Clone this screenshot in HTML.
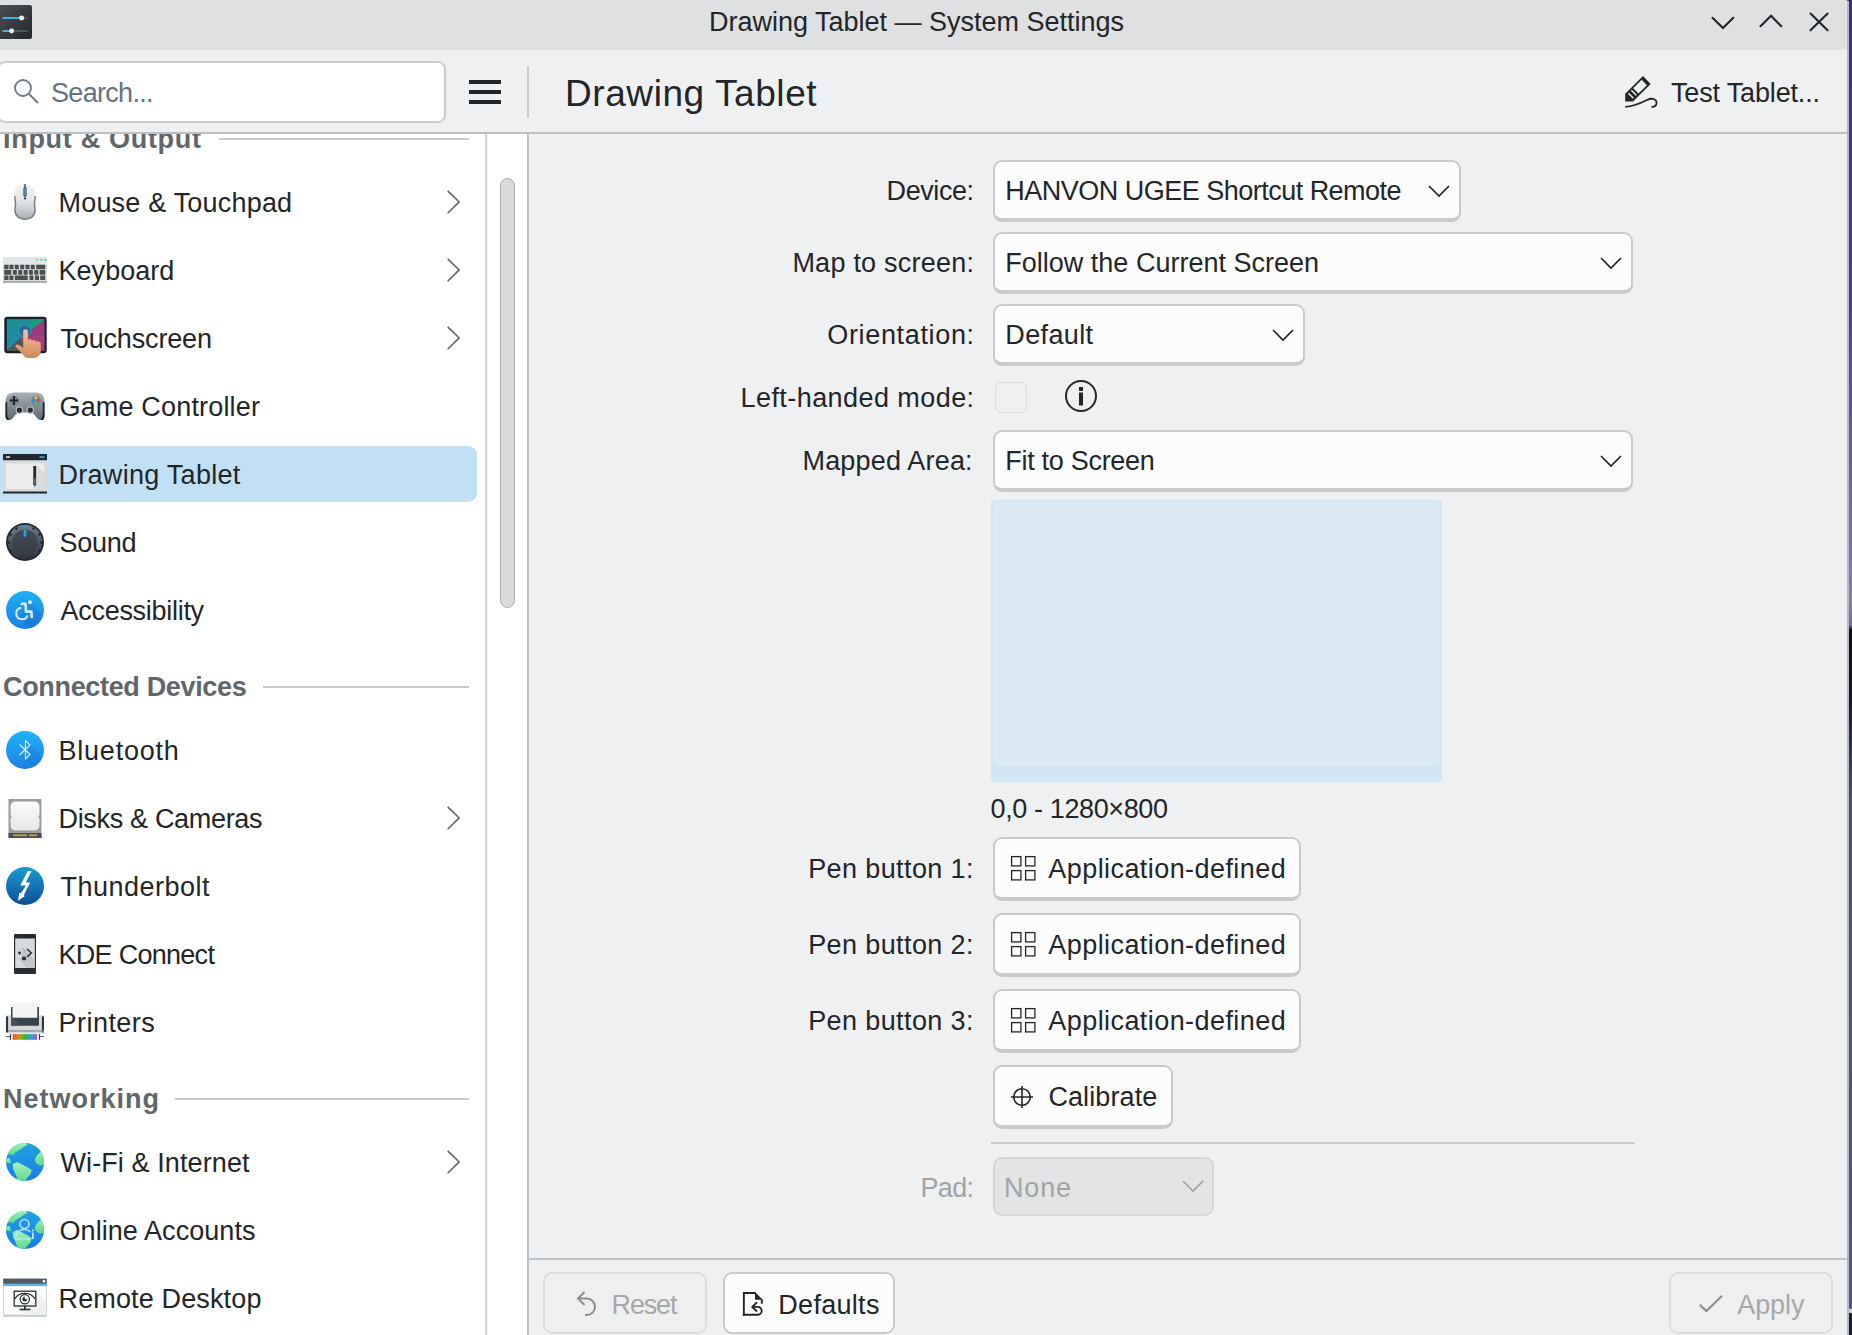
<!DOCTYPE html>
<html><head><meta charset="utf-8"><title>Drawing Tablet — System Settings</title>
<style>
html,body{margin:0;padding:0;}
body{width:1852px;height:1335px;overflow:hidden;position:relative;background:#4a3f94;font-family:"Liberation Sans", sans-serif;}
.t{position:absolute;white-space:nowrap;}
svg{overflow:visible}
</style></head><body>
<div style="position:absolute;left:1848px;top:0px;width:4px;height:1335px;background:linear-gradient(180deg,#3c2c8c 0%,#4a3a9c 22.5%,#6a5ab0 33.7%,#8878c0 44.9%,#7a6ab0 46.8%,#120a1c 47.2%,#1a1430 52.4%,#4a4888 59.9%,#54528f 98%,#d0d0e0 98.05%,#d0d0e0 98.3%,#1a1a40 98.4%)"></div>
<div style="position:absolute;left:0px;top:0px;width:1848px;height:1335px;background:#eff0f1;border-top-right-radius:3px;"></div>
<div style="position:absolute;left:0px;top:0px;width:1848px;height:50px;background:#dee0e2;border-top-right-radius:3px;"></div>
<svg style="position:absolute;left:0px;top:5px" width="32" height="34" viewBox="0 0 32 34">
<defs><linearGradient id="ai" x1="0" y1="0" x2="1" y2="1"><stop offset="0" stop-color="#4d5257"/><stop offset="1" stop-color="#23272b"/></linearGradient></defs>
<rect x="-4" y="0" width="36" height="34" rx="2" fill="url(#ai)"/>
<rect x="2.5" y="12" width="25" height="2" fill="#505558"/>
<rect x="2.5" y="12" width="19" height="2" fill="#3daee9"/>
<circle cx="21.6" cy="13" r="2.4" fill="#fff"/>
<rect x="2.5" y="25" width="25" height="2" fill="#505558"/>
<rect x="2.5" y="25" width="9" height="2" fill="#3daee9"/>
<circle cx="11.6" cy="26" r="2.4" fill="#fff"/>
</svg>
<div class="t" style="left:709.00px;top:8.94px;font-size:27px;line-height:27px;color:#232629;font-weight:400;letter-spacing:-0.005px;">Drawing Tablet — System Settings</div>
<svg style="position:absolute;left:1700px;top:0px" width="148" height="50" viewBox="0 0 148 50">
<g fill="none" stroke="#232629" stroke-width="2.1" stroke-linecap="round" stroke-linejoin="miter">
<path d="M12.5 17.8 L23 28 L33.3 17.8"/>
<path d="M60.5 26.2 L71 15.8 L81.3 26.2"/>
<path d="M110.5 13.6 L127.6 30.3 M127.6 13.6 L110.5 30.3"/>
</g></svg>
<div style="position:absolute;left:0px;top:134px;width:486px;height:1201px;background:#fff"></div>
<div style="position:absolute;left:485.2px;top:134px;width:1.5px;height:1201px;background:#d5d7d8"></div>
<div style="position:absolute;left:487.5px;top:134px;width:40px;height:1201px;background:#fff"></div>
<div style="position:absolute;left:527px;top:134px;width:2px;height:1201px;background:#bec1c4"></div>
<div style="position:absolute;left:499.5px;top:178px;width:15px;height:430px;box-sizing:border-box;background:#d9dbdc;border:1.5px solid #a9abac;border-radius:8px;"></div>
<div style="position:absolute;left:-10px;top:446px;width:487px;height:56px;background:#c2e0f5;border-radius:9px;"></div>
<div class="t" style="left:3.00px;top:125.94px;font-size:27px;line-height:27px;color:#61666a;font-weight:700;letter-spacing:0.697px;">Input &amp; Output</div>
<div style="position:absolute;left:219px;top:138px;width:250px;height:2px;background:#c8cbce"></div>
<div class="t" style="left:3.00px;top:673.94px;font-size:27px;line-height:27px;color:#61666a;font-weight:700;letter-spacing:-0.336px;">Connected Devices</div>
<div style="position:absolute;left:263px;top:686px;width:206px;height:2px;background:#c8cbce"></div>
<div class="t" style="left:3.00px;top:1085.94px;font-size:27px;line-height:27px;color:#61666a;font-weight:700;letter-spacing:0.987px;">Networking</div>
<div style="position:absolute;left:175px;top:1098px;width:294px;height:2px;background:#c8cbce"></div>
<div class="t" style="left:58.50px;top:189.94px;font-size:27px;line-height:27px;color:#232629;font-weight:400;letter-spacing:0.198px;">Mouse &amp; Touchpad</div>
<svg style="position:absolute;left:440px;top:186px" width="30" height="30" viewBox="0 0 30 30"><path d="M7.7 4.8 L19.2 15.9 L7.7 27.2" fill="none" stroke="#63686b" stroke-width="1.6"/></svg>
<div class="t" style="left:58.50px;top:257.94px;font-size:27px;line-height:27px;color:#232629;font-weight:400;letter-spacing:0.034px;">Keyboard</div>
<svg style="position:absolute;left:440px;top:254px" width="30" height="30" viewBox="0 0 30 30"><path d="M7.7 4.8 L19.2 15.9 L7.7 27.2" fill="none" stroke="#63686b" stroke-width="1.6"/></svg>
<div class="t" style="left:60.50px;top:325.94px;font-size:27px;line-height:27px;color:#232629;font-weight:400;letter-spacing:-0.167px;">Touchscreen</div>
<svg style="position:absolute;left:440px;top:322px" width="30" height="30" viewBox="0 0 30 30"><path d="M7.7 4.8 L19.2 15.9 L7.7 27.2" fill="none" stroke="#63686b" stroke-width="1.6"/></svg>
<div class="t" style="left:59.50px;top:393.94px;font-size:27px;line-height:27px;color:#232629;font-weight:400;letter-spacing:0.166px;">Game Controller</div>
<div class="t" style="left:58.50px;top:461.94px;font-size:27px;line-height:27px;color:#232629;font-weight:400;letter-spacing:0.286px;">Drawing Tablet</div>
<div class="t" style="left:59.50px;top:529.94px;font-size:27px;line-height:27px;color:#232629;font-weight:400;letter-spacing:-0.289px;">Sound</div>
<div class="t" style="left:60.50px;top:597.94px;font-size:27px;line-height:27px;color:#232629;font-weight:400;letter-spacing:-0.286px;">Accessibility</div>
<div class="t" style="left:58.50px;top:737.94px;font-size:27px;line-height:27px;color:#232629;font-weight:400;letter-spacing:0.778px;">Bluetooth</div>
<div class="t" style="left:58.50px;top:805.94px;font-size:27px;line-height:27px;color:#232629;font-weight:400;letter-spacing:-0.324px;">Disks &amp; Cameras</div>
<svg style="position:absolute;left:440px;top:802px" width="30" height="30" viewBox="0 0 30 30"><path d="M7.7 4.8 L19.2 15.9 L7.7 27.2" fill="none" stroke="#63686b" stroke-width="1.6"/></svg>
<div class="t" style="left:60.50px;top:873.94px;font-size:27px;line-height:27px;color:#232629;font-weight:400;letter-spacing:0.480px;">Thunderbolt</div>
<div class="t" style="left:58.50px;top:941.94px;font-size:27px;line-height:27px;color:#232629;font-weight:400;letter-spacing:-0.718px;">KDE Connect</div>
<div class="t" style="left:58.50px;top:1009.94px;font-size:27px;line-height:27px;color:#232629;font-weight:400;letter-spacing:0.468px;">Printers</div>
<div class="t" style="left:60.50px;top:1149.94px;font-size:27px;line-height:27px;color:#232629;font-weight:400;letter-spacing:0.098px;">Wi-Fi &amp; Internet</div>
<svg style="position:absolute;left:440px;top:1146px" width="30" height="30" viewBox="0 0 30 30"><path d="M7.7 4.8 L19.2 15.9 L7.7 27.2" fill="none" stroke="#63686b" stroke-width="1.6"/></svg>
<div class="t" style="left:59.50px;top:1217.94px;font-size:27px;line-height:27px;color:#232629;font-weight:400;letter-spacing:0.064px;">Online Accounts</div>
<div class="t" style="left:58.50px;top:1285.94px;font-size:27px;line-height:27px;color:#232629;font-weight:400;letter-spacing:0.141px;">Remote Desktop</div>
<svg style="position:absolute;left:13px;top:183px" width="24" height="38" viewBox="0 0 24 38">
<defs><linearGradient id="mg" x1="0" y1="0" x2="0" y2="1"><stop offset="0" stop-color="#f3f4f5"/><stop offset="0.5" stop-color="#e0e3e5"/><stop offset="1" stop-color="#a9afb5"/></linearGradient></defs>
<path d="M12 1.2 C5.6 1.2 1.4 5.2 1.4 11.5 V26 C1.4 33 5.6 36.8 12 36.8 C18.4 36.8 22.6 33 22.6 26 V11.5 C22.6 5.2 18.4 1.2 12 1.2Z" fill="url(#mg)"/>
<path d="M1.9 13 C1.6 16, 2.6 18, 2.6 20 C2.6 23, 2.0 24, 2.0 27 C2.0 32.5, 5.8 36.2, 12 36.2 C18.2 36.2, 22.0 32.5, 22.0 27 C22.0 24, 21.4 23, 21.4 20 C21.4 18, 22.4 16, 22.1 13" fill="none" stroke="#6c7379" stroke-width="1.4" opacity="0.9"/>
<rect x="11.2" y="1" width="1.6" height="4" fill="#5a6268"/>
<rect x="10.4" y="4.2" width="3.2" height="9.6" rx="1.2" fill="#3e4d58"/>
<rect x="10.9" y="5" width="2.2" height="7.5" rx="0.8" fill="#4f86a8"/>
<circle cx="12" cy="15.4" r="1.1" fill="#30363a"/>
</svg>
<svg style="position:absolute;left:3px;top:257px" width="44" height="26" viewBox="0 0 44 26">
<rect x="0" y="0" width="44" height="26" fill="#d8dcde"/>
<rect x="0" y="0" width="44" height="7" fill="#e3e6e8"/>
<rect x="0" y="24" width="44" height="2" fill="#a9b0b3"/>
<rect x="1.2" y="7.700000000000001" width="4.3" height="4.6" rx="0.6" fill="#48524f"/><rect x="6.4" y="7.700000000000001" width="4" height="4.6" rx="0.6" fill="#48524f"/><rect x="11.799999999999999" y="7.700000000000001" width="4" height="4.6" rx="0.6" fill="#48524f"/><rect x="17.2" y="7.700000000000001" width="4" height="4.6" rx="0.6" fill="#48524f"/><rect x="22.5" y="7.700000000000001" width="4" height="4.6" rx="0.6" fill="#48524f"/><rect x="27.8" y="7.700000000000001" width="4" height="4.6" rx="0.6" fill="#48524f"/><rect x="33.2" y="7.700000000000001" width="9" height="4.6" rx="0.6" fill="#48524f"/><rect x="1.2" y="13.1" width="7" height="4.6" rx="0.6" fill="#48524f"/><rect x="9.899999999999999" y="13.1" width="4" height="4.6" rx="0.6" fill="#48524f"/><rect x="15.2" y="13.1" width="4" height="4.6" rx="0.6" fill="#48524f"/><rect x="20.599999999999998" y="13.1" width="4" height="4.6" rx="0.6" fill="#48524f"/><rect x="25.9" y="13.1" width="4" height="4.6" rx="0.6" fill="#48524f"/><rect x="31.2" y="13.1" width="4" height="4.6" rx="0.6" fill="#48524f"/><rect x="36.6" y="13.1" width="5.6" height="4.6" rx="0.6" fill="#48524f"/><rect x="1.2" y="18.4" width="4.3" height="4.6" rx="0.6" fill="#48524f"/><rect x="6.4" y="18.4" width="4" height="4.6" rx="0.6" fill="#48524f"/><rect x="11.799999999999999" y="18.4" width="13" height="4.6" rx="0.6" fill="#48524f"/><rect x="26.5" y="18.4" width="4" height="4.6" rx="0.6" fill="#48524f"/><rect x="32.0" y="18.4" width="4" height="4.6" rx="0.6" fill="#48524f"/><rect x="37.2" y="18.4" width="5" height="4.6" rx="0.6" fill="#48524f"/>
<rect x="33.5" y="2" width="1.6" height="1.6" fill="#2ecc71"/>
<rect x="37.5" y="2" width="1.6" height="1.6" fill="#2ecc71"/>
<rect x="41.5" y="2" width="1.6" height="1.6" fill="#2ecc71"/>
</svg>
<svg style="position:absolute;left:4px;top:316px" width="43" height="44" viewBox="0 0 43 44">
<defs><linearGradient id="hnd" x1="0" y1="0" x2="0" y2="1"><stop offset="0" stop-color="#f6c6a6"/><stop offset="0.5" stop-color="#e3a47c"/><stop offset="1" stop-color="#cf8659"/></linearGradient>
<linearGradient id="tsl" x1="0" y1="0" x2="1" y2="1"><stop offset="0" stop-color="#1d8c94"/><stop offset="1" stop-color="#2288c0"/></linearGradient></defs>
<rect x="0.3" y="0.8" width="42.4" height="36.4" rx="3" fill="#1b2227"/>
<clipPath id="tsc"><rect x="2.6" y="3.3" width="37.8" height="31.4"/></clipPath>
<g clip-path="url(#tsc)">
<rect x="2.6" y="3.3" width="37.8" height="31.4" fill="url(#tsl)"/>
<path d="M16.5 22 L2 3 L41 3 Z" fill="#1d8f90"/>
<path d="M16.5 22 L28 3 L41 3 Z" fill="#14a07c"/>
<path d="M16.5 22 L41 3 L41 35 L26 35 Z" fill="#9c3a7e"/>
<path d="M16.5 22 L41 19 L41 35 L30 35 Z" fill="#a8407a" opacity="0.7"/>
<path d="M2 35 L16.5 22 L24 35 Z" fill="#4e5658"/>
<path d="M16.5 22 L24 35 L27 35 L22 22Z" fill="#c03a55"/>
</g>
<circle cx="20.7" cy="14.7" r="6.2" fill="#27699a" stroke="#2b9fd6" stroke-width="0.9"/>
<path d="M19.2 15.5 C19.2 12.5, 23.9 12.5, 23.9 15.5 L23.9 24.5 C24.5 22.8, 27.5 22.8, 28 24.8 C28.8 23.5, 31.5 23.8, 32 25.8 C33 24.8, 36.5 25.2, 36.8 27.5 L36.8 34 C36.8 39.5, 33.5 42, 29 42 L25 42 C21.5 42, 19.5 40, 17.5 37 L11.8 31 C11 30, 11.5 28.3, 13.5 28.5 C15.5 28.7, 17.5 30.5, 19.2 32 Z" fill="url(#hnd)"/>
</svg>
<svg style="position:absolute;left:5px;top:391px" width="40" height="30" viewBox="0 0 40 30">
<defs><linearGradient id="gcg" x1="0" y1="0" x2="0" y2="1"><stop offset="0" stop-color="#a9b0b6"/><stop offset="1" stop-color="#5f676e"/></linearGradient></defs>
<path d="M9 1.5 L31 1.5 C36.5 1.5, 39.5 5, 39.5 11 L39.5 25 C39.5 29, 35.5 30.5, 32.5 27.5 C30 25, 29 22, 26 21.6 L14 21.6 C11 22, 10 25, 7.5 27.5 C4.5 30.5, 0.5 29, 0.5 25 L0.5 11 C0.5 5, 3.5 1.5, 9 1.5Z" fill="url(#gcg)"/>
<path d="M0.5 11.5 L0.5 25 C0.5 28.5, 2.5 29.5, 4.5 29 C2.8 27, 2.2 25, 2.2 22 L2.2 11Z M39.5 11.5 L39.5 25 C39.5 28.5, 37.5 29.5, 35.5 29 C37.2 27, 37.8 25, 37.8 22 L37.8 11Z" fill="#1e2226"/>
<circle cx="9" cy="9.5" r="4.8" fill="#7d858c"/>
<path d="M8 5 H10 V8.5 H13.2 V10.5 H10 V14 H8 V10.5 H4.8 V8.5 H8Z" fill="#23272b"/>
<circle cx="30.9" cy="9.5" r="4.8" fill="#7d858c"/>
<circle cx="30.9" cy="6.7" r="1.45" fill="#fdbc3b"/><circle cx="28.1" cy="9.5" r="1.45" fill="#2196f3"/><circle cx="33.7" cy="9.5" r="1.45" fill="#e9444f"/><circle cx="30.9" cy="12.3" r="1.45" fill="#2ecc71"/>
<circle cx="14.4" cy="19.1" r="3.8" fill="#b5bcc2"/>
<circle cx="25.3" cy="19.1" r="3.8" fill="#b5bcc2"/>
<circle cx="14.4" cy="19.1" r="2.6" fill="#262a2e"/>
<circle cx="25.3" cy="19.1" r="2.6" fill="#262a2e"/>
</svg>
<svg style="position:absolute;left:3px;top:454px" width="44" height="40" viewBox="0 0 44 40">
<rect x="0" y="0" width="44" height="6.5" fill="#23272b"/>
<rect x="3" y="2.3" width="4" height="1.6" fill="#e8e8e8"/>
<rect x="36.5" y="2.3" width="5" height="1.6" fill="#3daee9"/>
<rect x="0" y="6.5" width="44" height="31.5" fill="#d9dadb"/>
<rect x="3" y="9.5" width="38" height="25.5" fill="#ededed"/>
<path d="M32 9.5 L41 18.5 L41 35 L32 35Z" fill="#dcdcdc"/>
<rect x="30.3" y="12" width="2.8" height="19" fill="#23272b"/>
<rect x="30.3" y="24" width="2.8" height="6" fill="#59636b"/>
<path d="M30.3 31 L33.1 31 L31.7 34Z" fill="#3daee9"/>
<rect x="0" y="37.5" width="44" height="2" fill="#23272b"/>
</svg>
<svg style="position:absolute;left:6px;top:523px" width="38" height="38" viewBox="0 0 38 38">
<defs><linearGradient id="sg1" x1="0" y1="0" x2="0" y2="1"><stop offset="0" stop-color="#707c8a"/><stop offset="1" stop-color="#2c3238"/></linearGradient>
<linearGradient id="sg2" x1="0" y1="0" x2="0" y2="1"><stop offset="0" stop-color="#444a55"/><stop offset="1" stop-color="#363c44"/></linearGradient></defs>
<circle cx="19" cy="19" r="19" fill="#222830"/>
<circle cx="19" cy="19" r="17.3" fill="url(#sg1)"/>
<circle cx="19" cy="19.5" r="12.8" fill="url(#sg2)"/>
<g fill="#1f252b"><circle cx="10.5" cy="5.5" r="1.2"/><circle cx="27.5" cy="5.5" r="1.2"/><circle cx="4.5" cy="11.5" r="1.2"/><circle cx="33.5" cy="11.5" r="1.2"/><circle cx="2.6" cy="19.5" r="1.2"/><circle cx="35.4" cy="19.5" r="1.2"/><circle cx="4.5" cy="28" r="1.2"/><circle cx="33.5" cy="28" r="1.2"/></g>
<circle cx="19" cy="3.4" r="1.4" fill="#1d99f3"/>
<rect x="17.6" y="7" width="2.8" height="6.8" rx="1.4" fill="#1aa3f5"/>
</svg>
<svg style="position:absolute;left:6px;top:591px" width="38" height="38" viewBox="0 0 38 38">
<defs><linearGradient id="acg" x1="0" y1="0" x2="0" y2="1"><stop offset="0" stop-color="#1fb0f5"/><stop offset="1" stop-color="#1a7fe0"/></linearGradient></defs>
<circle cx="19" cy="19" r="19" fill="url(#acg)"/>
<path d="M22 9 L37 24 A19 19 0 0 1 24 37.5 L14 27Z" fill="#1565b8" opacity="0.25"/>
<circle cx="24" cy="11.2" r="2" fill="#e3f1fb"/>
<path d="M15.1 16.7 A5.8 5.8 0 1 0 21.55 24.4" fill="none" stroke="#d6ebfa" stroke-width="2"/>
<path d="M15.2 14 C16.5 11.8 19.6 12 19.8 14.8 L19.9 20.6 L25.4 20.6 L25.8 27" fill="none" stroke="#d6ebfa" stroke-width="2.6" stroke-linejoin="round"/>
</svg>
<svg style="position:absolute;left:6px;top:731px" width="38" height="38" viewBox="0 0 38 38">
<defs><linearGradient id="btg" x1="0" y1="0" x2="0" y2="1"><stop offset="0" stop-color="#1eb4f8"/><stop offset="1" stop-color="#1d7fe3"/></linearGradient></defs>
<circle cx="19" cy="19" r="19" fill="url(#btg)"/>
<path d="M20 10 L37 27 A19 19 0 0 1 27 36.5 L18 27Z" fill="#1565b8" opacity="0.2"/>
<path d="M13.5 13.5 L24 23.5 L19.5 28 L19.5 9.5 L24 14 L13.5 24" fill="none" stroke="#cfe9fb" stroke-width="1.3" stroke-linejoin="round"/>
</svg>
<svg style="position:absolute;left:8px;top:799px" width="34" height="39" viewBox="0 0 34 39">
<rect x="0.5" y="0" width="33" height="39" fill="#9a9ea1"/>
<rect x="0.5" y="34" width="33" height="5" fill="#4a5054"/>
<rect x="5" y="35.5" width="14" height="1.6" fill="#e0a030"/>
<rect x="21" y="35.5" width="8" height="1.6" fill="#e0a030"/>
<defs><linearGradient id="dkg" x1="0" y1="0" x2="0" y2="1"><stop offset="0" stop-color="#fafbfb"/><stop offset="1" stop-color="#e5e7e9"/></linearGradient></defs>
<path d="M8 2.5 H26 C29.5 2.5, 31.5 4.5, 31.5 8 V16 C30 17, 30 18.5, 31.5 19.5 V26 C31.5 29.5, 29.5 31.5, 26 31.5 H8 C4.5 31.5, 2.5 29.5, 2.5 26 V19.5 C4 18.5, 4 17, 2.5 16 V8 C2.5 4.5, 4.5 2.5, 8 2.5Z" fill="url(#dkg)"/>
</svg>
<svg style="position:absolute;left:6px;top:867px" width="38" height="38" viewBox="0 0 38 38">
<defs><linearGradient id="tbg" x1="0" y1="0" x2="0" y2="1"><stop offset="0" stop-color="#1a9ad0"/><stop offset="1" stop-color="#0d4f96"/></linearGradient></defs>
<circle cx="19" cy="19" r="19" fill="url(#tbg)"/>
<path d="M21.7 4 L25.5 4 L19.8 15.5 L24.1 15.5 L17.8 28.3 L18.9 29.1 L12 33.8 L13.3 25.6 L14.9 26.6 L19.8 18.5 L14.2 18.5 Z" fill="#ffffff"/>
</svg>
<svg style="position:absolute;left:14px;top:934px" width="22" height="40" viewBox="0 0 22 40">
<rect x="0" y="0" width="22" height="40" rx="1" fill="#2a2e32"/>
<rect x="1.2" y="4.5" width="19.6" height="29.5" fill="#d7dadc"/>
<path d="M9 14 L20.8 25.8 L20.8 34 L13 34 L6 26Z" fill="#c3c7ca"/>
<rect x="7" y="1.3" width="8" height="1.4" fill="#1c1f22"/>
<circle cx="5.6" cy="19" r="1.4" fill="#2a2e32"/>
<circle cx="10" cy="24.5" r="2.1" fill="#2a2e32"/>
<path d="M13 15 L17.3 19 L13 23" fill="none" stroke="#2a2e32" stroke-width="1.6"/>
<path d="M8.5 14.5 L11.5 17.5" stroke="#2a2e32" stroke-width="0.7" stroke-dasharray="1 1"/>
</svg>
<svg style="position:absolute;left:5px;top:1002px" width="40" height="39" viewBox="0 0 40 39">
<defs><linearGradient id="rb" x1="0" y1="0" x2="1" y2="0"><stop offset="0" stop-color="#e8442e"/><stop offset="0.25" stop-color="#e0901e"/><stop offset="0.5" stop-color="#1ec61e"/><stop offset="0.75" stop-color="#3a9ee0"/><stop offset="1" stop-color="#9a5ad8"/></linearGradient></defs>
<rect x="0.8" y="13.4" width="38.2" height="18.2" fill="#d5d9dc"/>
<rect x="7.4" y="1" width="24.7" height="15" fill="#f3f4f5"/>
<path d="M6 5 H7.5 V15.8 H32.3 V5 H34 V22.7 C34 23.3, 33.6 23.7, 33 23.7 H7 C6.4 23.7, 6 23.3, 6 22.7Z" fill="#3a424c"/>
<path d="M7.5 15.8 L15 23.7 H7 C6.4 23.7 6 23.3 6 22.7 V15.8Z" fill="#4a535d"/>
<rect x="0.8" y="28" width="38.2" height="2" fill="#a3a9ae"/>
<rect x="1" y="14.3" width="2.1" height="16.2" rx="0.8" fill="#2f353b"/>
<rect x="36.9" y="14.3" width="2.1" height="16.2" rx="0.8" fill="#2f353b"/>
<rect x="37.5" y="27.8" width="1.5" height="2.1" fill="#27c93f"/>
<rect x="1" y="34" width="4" height="0.9" fill="#4a535d"/>
<rect x="35" y="34" width="4" height="0.9" fill="#4a535d"/>
<rect x="4.9" y="32.1" width="1.2" height="5.7" fill="#2f353b"/>
<rect x="33.9" y="32.1" width="1.2" height="5.7" fill="#2f353b"/>
<rect x="7.7" y="32.1" width="24.4" height="5.7" fill="url(#rb)"/>
</svg>
<svg style="position:absolute;left:6px;top:1143px" width="38" height="38" viewBox="0 0 38 38">
<defs><linearGradient id="glg1" x1="0" y1="0" x2="0" y2="1"><stop offset="0" stop-color="#1fa3dd"/><stop offset="1" stop-color="#1a7de8"/></linearGradient>
<linearGradient id="lnd1" x1="0" y1="0" x2="0" y2="1"><stop offset="0" stop-color="#a2f3bd"/><stop offset="1" stop-color="#5cd684"/></linearGradient></defs>
<circle cx="19" cy="19" r="19" fill="url(#glg1)"/>
<clipPath id="gcl1"><circle cx="19" cy="19" r="19"/></clipPath>
<g clip-path="url(#gcl1)" fill="url(#lnd1)">
<path d="M1.1 11.6 L6.4 11.4 L7.5 12.7 L9 9.7 L15 6 L18 3.4 L21.3 2.2 L20.2 -1 L-2 -1 L-2 11.6 Z"/>
<path d="M-1 16.2 L3.4 15 L5.2 19.8 L3 20.3 L-1 18.5Z"/>
<path d="M6.7 21 L11.2 19.1 L16.5 21.7 L21 24 L25.8 27 L24.7 31.1 L20.2 36 L19.8 40 L11 40 L11.2 35.6 L9.7 31.5 L7.1 26.2 Z"/>
<path d="M28.8 17.2 C29.5 14, 31 12, 35.2 8.6 L40 7 L40 22 L37.4 22.1 C35 22.8, 33 23, 30 20.2 Z"/>
</g>
</svg>
<svg style="position:absolute;left:6px;top:1211px" width="38" height="38" viewBox="0 0 38 38">
<defs><linearGradient id="glg2" x1="0" y1="0" x2="0" y2="1"><stop offset="0" stop-color="#1fa3dd"/><stop offset="1" stop-color="#1a7de8"/></linearGradient>
<linearGradient id="lnd2" x1="0" y1="0" x2="0" y2="1"><stop offset="0" stop-color="#a2f3bd"/><stop offset="1" stop-color="#5cd684"/></linearGradient></defs>
<circle cx="19" cy="19" r="19" fill="url(#glg2)"/>
<clipPath id="gcl2"><circle cx="19" cy="19" r="19"/></clipPath>
<g clip-path="url(#gcl2)" fill="url(#lnd2)">
<path d="M1.1 11.6 L6.4 11.4 L7.5 12.7 L9 9.7 L15 6 L18 3.4 L21.3 2.2 L20.2 -1 L-2 -1 L-2 11.6 Z"/>
<path d="M-1 16.2 L3.4 15 L5.2 19.8 L3 20.3 L-1 18.5Z"/>
<path d="M6.7 21 L11.2 19.1 L16.5 21.7 L21 24 L25.8 27 L24.7 31.1 L20.2 36 L19.8 40 L11 40 L11.2 35.6 L9.7 31.5 L7.1 26.2 Z"/>
<path d="M28.8 17.2 C29.5 14, 31 12, 35.2 8.6 L40 7 L40 22 L37.4 22.1 C35 22.8, 33 23, 30 20.2 Z"/>
</g>

<g fill="none" stroke="#bfe3fa" stroke-width="1.6" opacity="0.95">
<circle cx="18.5" cy="13" r="4.5"/>
<path d="M9.5 28 C10 21, 14 18.5, 18.5 18.5 C21 18.5, 23 19.5, 24.5 21"/>
<path d="M9.5 28 H24"/>
</g>
<rect x="26" y="21.5" width="1.8" height="6.5" fill="#bfe3fa"/>
<rect x="26" y="18.5" width="1.8" height="1.8" fill="#bfe3fa"/>
</svg>
<svg style="position:absolute;left:3px;top:1278px" width="44" height="40" viewBox="0 0 44 40">
<rect x="0.2" y="0.6" width="43.6" height="38.2" fill="#c6cbce"/>
<rect x="1" y="0.6" width="42" height="36" fill="#fdfdfd"/>
<path d="M12 28 L32.8 13.2 L43 23 L43 36.6 L21 36.6 Z" fill="#eceeef" opacity="0.9"/>
<rect x="0.2" y="0.6" width="43.6" height="5.3" fill="#535c66"/>
<rect x="0.2" y="5.9" width="43.6" height="2.2" fill="#5ab8e8"/>
<circle cx="41" cy="3.3" r="1.3" fill="#fff"/>
<rect x="11.2" y="13.2" width="21.6" height="14.8" fill="#fff" stroke="#2a2e32" stroke-width="1.3"/>
<path d="M11.8 21 C14 17, 18 15.4, 21.8 15.4 C25.6 15.4, 29.6 17, 32.2 21" fill="none" stroke="#2a2e32" stroke-width="1.2"/>
<circle cx="21.8" cy="21.2" r="4.6" fill="#fff" stroke="#2a2e32" stroke-width="1.2"/>
<circle cx="21.8" cy="21.2" r="2.4" fill="#2a2e32"/>
<path d="M21.8 21.2 L21.8 18.6 A2.6 2.6 0 0 1 24.4 21.2Z" fill="#fff"/>
<rect x="21" y="28" width="1.7" height="3.5" fill="#2a2e32"/>
<rect x="16.5" y="30.8" width="11" height="1.4" rx="0.7" fill="#2a2e32"/>
</svg>
<div style="position:absolute;left:0px;top:50px;width:1848px;height:82px;background:#eff0f1"></div>
<div style="position:absolute;left:0px;top:132px;width:1848px;height:2px;background:#bec1c4"></div>
<div style="position:absolute;left:-3px;top:61px;width:449px;height:62px;box-sizing:border-box;background:#fff;border:2px solid #cbcdce;border-radius:8px;"></div>
<svg style="position:absolute;left:14px;top:79px" width="26" height="26" viewBox="0 0 26 26"><g fill="none" stroke="#6e7d89" stroke-width="1.9"><circle cx="9" cy="9" r="8"/><path d="M15 15 L24 24"/></g></svg>
<div class="t" style="left:51.00px;top:79.94px;font-size:27px;line-height:27px;color:#637384;font-weight:400;letter-spacing:-0.694px;">Search...</div>
<div style="position:absolute;left:469px;top:80px;width:32px;height:4px;background:#232629"></div>
<div style="position:absolute;left:469px;top:90px;width:32px;height:4px;background:#232629"></div>
<div style="position:absolute;left:469px;top:100px;width:32px;height:4px;background:#232629"></div>
<div style="position:absolute;left:527px;top:66px;width:2px;height:52px;background:#c9cccf"></div>
<div class="t" style="left:565.00px;top:75.08px;font-size:37px;line-height:37px;color:#232629;font-weight:400;letter-spacing:0.581px;">Drawing Tablet</div>
<svg style="position:absolute;left:1620px;top:70px" width="45" height="42" viewBox="0 0 45 42">
<path d="M5.2 23.8 L23 6.1 L30.7 14 L13 31.6 L5.2 31.6 Z" fill="#232629"/>
<path d="M21.7 9.75 L26.9 15.2 L18.4 23.4 L13.2 18.3 Z" fill="#eff0f1"/>
<path d="M11.3 20.3 L16.3 25.3 M8.4 23.3 L13.4 28.3" stroke="#eff0f1" stroke-width="1.5"/>
<path d="M5.2 36.8 C 14 36.5, 21 33, 27 30 C 33 27, 37 30, 36.5 33.5 C 36 36, 33.5 37, 31.5 36.8" fill="none" stroke="#232629" stroke-width="1.8"/>
</svg>
<div class="t" style="left:1671.00px;top:79.94px;font-size:27px;line-height:27px;color:#232629;font-weight:400;letter-spacing:-0.159px;">Test Tablet...</div>
<div class="t" style="left:886.60px;top:177.94px;font-size:27px;line-height:27px;color:#232629;font-weight:400;letter-spacing:-0.422px;">Device:</div>
<div style="position:absolute;left:993px;top:160px;width:468px;height:62px;box-sizing:border-box;background:#fcfcfc;border:2px solid #c9cacb;border-bottom-width:4px;border-radius:9px;"></div>
<div class="t" style="left:1005.30px;top:177.94px;font-size:27px;line-height:27px;color:#232629;font-weight:400;letter-spacing:-0.512px;">HANVON UGEE Shortcut Remote</div>
<svg style="position:absolute;left:1428px;top:180px" width="22" height="22" viewBox="0 0 22 22"><path d="M1 6 L11 16 L21 6" fill="none" stroke="#232629" stroke-width="1.7"/></svg>
<div class="t" style="left:792.40px;top:249.94px;font-size:27px;line-height:27px;color:#232629;font-weight:400;letter-spacing:0.240px;">Map to screen:</div>
<div style="position:absolute;left:993px;top:232px;width:640px;height:62px;box-sizing:border-box;background:#fcfcfc;border:2px solid #c9cacb;border-bottom-width:4px;border-radius:9px;"></div>
<div class="t" style="left:1005.30px;top:249.94px;font-size:27px;line-height:27px;color:#232629;font-weight:400;letter-spacing:0.003px;">Follow the Current Screen</div>
<svg style="position:absolute;left:1600px;top:252px" width="22" height="22" viewBox="0 0 22 22"><path d="M1 6 L11 16 L21 6" fill="none" stroke="#232629" stroke-width="1.7"/></svg>
<div class="t" style="left:827.30px;top:321.94px;font-size:27px;line-height:27px;color:#232629;font-weight:400;letter-spacing:0.657px;">Orientation:</div>
<div style="position:absolute;left:993px;top:304px;width:312px;height:62px;box-sizing:border-box;background:#fcfcfc;border:2px solid #c9cacb;border-bottom-width:4px;border-radius:9px;"></div>
<div class="t" style="left:1005.30px;top:321.94px;font-size:27px;line-height:27px;color:#232629;font-weight:400;letter-spacing:0.359px;">Default</div>
<svg style="position:absolute;left:1272px;top:324px" width="22" height="22" viewBox="0 0 22 22"><path d="M1 6 L11 16 L21 6" fill="none" stroke="#232629" stroke-width="1.7"/></svg>
<div class="t" style="left:740.50px;top:384.94px;font-size:27px;line-height:27px;color:#232629;font-weight:400;letter-spacing:0.433px;">Left-handed mode:</div>
<div style="position:absolute;left:995px;top:382px;width:32px;height:31px;box-sizing:border-box;background:#efefef;border:1.5px solid #dcdcdc;border-radius:6px;"></div>
<svg style="position:absolute;left:1064px;top:379px" width="34" height="34" viewBox="0 0 34 34"><circle cx="17" cy="17" r="15" fill="none" stroke="#232629" stroke-width="2"/><rect x="15" y="13.5" width="4" height="13" fill="#232629"/><rect x="15" y="8" width="4" height="4" fill="#232629"/></svg>
<div class="t" style="left:802.50px;top:447.94px;font-size:27px;line-height:27px;color:#232629;font-weight:400;letter-spacing:0.181px;">Mapped Area:</div>
<div style="position:absolute;left:993px;top:430px;width:640px;height:62px;box-sizing:border-box;background:#fcfcfc;border:2px solid #c9cacb;border-bottom-width:4px;border-radius:9px;"></div>
<div class="t" style="left:1005.30px;top:447.94px;font-size:27px;line-height:27px;color:#232629;font-weight:400;letter-spacing:-0.295px;">Fit to Screen</div>
<svg style="position:absolute;left:1600px;top:450px" width="22" height="22" viewBox="0 0 22 22"><path d="M1 6 L11 16 L21 6" fill="none" stroke="#232629" stroke-width="1.7"/></svg>
<div style="position:absolute;left:991px;top:500px;width:451px;height:282px;background:#d1e7f5;border-radius:3px;"></div>
<div style="position:absolute;left:993px;top:502px;width:447px;height:264px;background:#dbeaf4;border-radius:6px;"></div>
<div class="t" style="left:990.60px;top:795.94px;font-size:27px;line-height:27px;color:#232629;font-weight:400;letter-spacing:-0.384px;">0,0 - 1280×800</div>
<div class="t" style="left:808.20px;top:855.94px;font-size:27px;line-height:27px;color:#232629;font-weight:400;letter-spacing:0.389px;">Pen button 1:</div>
<div style="position:absolute;left:993px;top:837px;width:308px;height:64px;box-sizing:border-box;background:#fcfcfc;border:2px solid #c9cacb;border-bottom-width:4px;border-radius:9px;"></div>
<svg style="position:absolute;left:1010px;top:855px" width="26" height="26" viewBox="0 0 26 26"><g fill="none" stroke="#232629" stroke-width="1.3"><rect x="1.6" y="1.6" width="9.3" height="9.3"/><rect x="15.6" y="1.6" width="9.3" height="9.3"/><rect x="1.6" y="15.6" width="9.3" height="9.3"/><rect x="15.6" y="15.6" width="9.3" height="9.3"/></g></svg>
<div class="t" style="left:1048.30px;top:855.94px;font-size:27px;line-height:27px;color:#232629;font-weight:400;letter-spacing:0.431px;">Application-defined</div>
<div class="t" style="left:808.20px;top:931.94px;font-size:27px;line-height:27px;color:#232629;font-weight:400;letter-spacing:0.389px;">Pen button 2:</div>
<div style="position:absolute;left:993px;top:913px;width:308px;height:64px;box-sizing:border-box;background:#fcfcfc;border:2px solid #c9cacb;border-bottom-width:4px;border-radius:9px;"></div>
<svg style="position:absolute;left:1010px;top:931px" width="26" height="26" viewBox="0 0 26 26"><g fill="none" stroke="#232629" stroke-width="1.3"><rect x="1.6" y="1.6" width="9.3" height="9.3"/><rect x="15.6" y="1.6" width="9.3" height="9.3"/><rect x="1.6" y="15.6" width="9.3" height="9.3"/><rect x="15.6" y="15.6" width="9.3" height="9.3"/></g></svg>
<div class="t" style="left:1048.30px;top:931.94px;font-size:27px;line-height:27px;color:#232629;font-weight:400;letter-spacing:0.431px;">Application-defined</div>
<div class="t" style="left:808.20px;top:1007.94px;font-size:27px;line-height:27px;color:#232629;font-weight:400;letter-spacing:0.389px;">Pen button 3:</div>
<div style="position:absolute;left:993px;top:989px;width:308px;height:64px;box-sizing:border-box;background:#fcfcfc;border:2px solid #c9cacb;border-bottom-width:4px;border-radius:9px;"></div>
<svg style="position:absolute;left:1010px;top:1007px" width="26" height="26" viewBox="0 0 26 26"><g fill="none" stroke="#232629" stroke-width="1.3"><rect x="1.6" y="1.6" width="9.3" height="9.3"/><rect x="15.6" y="1.6" width="9.3" height="9.3"/><rect x="1.6" y="15.6" width="9.3" height="9.3"/><rect x="15.6" y="15.6" width="9.3" height="9.3"/></g></svg>
<div class="t" style="left:1048.30px;top:1007.94px;font-size:27px;line-height:27px;color:#232629;font-weight:400;letter-spacing:0.431px;">Application-defined</div>
<div style="position:absolute;left:993px;top:1065px;width:180px;height:64px;box-sizing:border-box;background:#fcfcfc;border:2px solid #c9cacb;border-bottom-width:4px;border-radius:9px;"></div>
<svg style="position:absolute;left:1010px;top:1085px" width="24" height="24" viewBox="0 0 24 24"><g fill="none" stroke="#232629" stroke-width="1.6"><circle cx="12" cy="12" r="8.3"/><path d="M12 1 V23 M1 12 H23"/></g></svg>
<div class="t" style="left:1048.40px;top:1083.94px;font-size:27px;line-height:27px;color:#232629;font-weight:400;letter-spacing:0.108px;">Calibrate</div>
<div style="position:absolute;left:991px;top:1142px;width:644px;height:2px;background:#c8cacc"></div>
<div class="t" style="left:920.50px;top:1174.94px;font-size:27px;line-height:27px;color:#a1a4a6;font-weight:400;letter-spacing:-0.680px;">Pad:</div>
<div style="position:absolute;left:993px;top:1157px;width:221px;height:59px;box-sizing:border-box;background:#e3e4e5;border:2px solid #d5d6d7;border-radius:9px;"></div>
<div class="t" style="left:1004.00px;top:1174.94px;font-size:27px;line-height:27px;color:#a1a4a6;font-weight:400;letter-spacing:0.823px;">None</div>
<svg style="position:absolute;left:1182px;top:1176px" width="22" height="22" viewBox="0 0 22 22"><path d="M1 5 L11 15 L21 5" fill="none" stroke="#a1a4a6" stroke-width="1.7"/></svg>
<div style="position:absolute;left:529px;top:1258px;width:1318px;height:2px;background:#c1c4c7"></div>
<div style="position:absolute;left:543px;top:1272px;width:164px;height:62px;box-sizing:border-box;background:#efefef;border:2px solid #dcdcdc;border-radius:9px;"></div>
<svg style="position:absolute;left:574px;top:1288px" width="26" height="30" viewBox="0 0 26 30"><g fill="none" stroke="#8c8c8c" stroke-width="2"><path d="M10.5 4 L4 10.5 L10.5 17"/><path d="M4 10.6 H12.8 A 8.2 8.2 0 0 1 12.8 27 H11"/></g></svg>
<div class="t" style="left:611.60px;top:1291.94px;font-size:27px;line-height:27px;color:#a6a8aa;font-weight:400;letter-spacing:-1.183px;">Reset</div>
<div style="position:absolute;left:723px;top:1272px;width:172px;height:62px;box-sizing:border-box;background:#fcfcfc;border:2px solid #c9cacb;border-radius:9px;"></div>
<svg style="position:absolute;left:736px;top:1286px" width="34" height="34" viewBox="0 0 34 34"><path d="M19 6 L26.7 13.75 L19 13.75 Z" fill="#232629"/><g fill="none" stroke="#232629" stroke-width="1.9"><path d="M7.85 29.7 V6.95 H19.5 M25.8 13.2 V17.8"/><path d="M21 16.3 L16.3 20.9 L21 25.5"/><path d="M16.3 20.9 H21.8 A 3.93 3.93 0 0 1 21.8 28.76 H6.9"/></g></svg>
<div class="t" style="left:778.30px;top:1291.94px;font-size:27px;line-height:27px;color:#232629;font-weight:400;letter-spacing:0.293px;">Defaults</div>
<div style="position:absolute;left:1669px;top:1272px;width:164px;height:62px;box-sizing:border-box;background:#efefef;border:2px solid #dcdcdc;border-radius:9px;"></div>
<svg style="position:absolute;left:1697px;top:1293px" width="28" height="22" viewBox="0 0 28 22"><path d="M2.8 11.8 L9.4 18 L25.1 2.7" fill="none" stroke="#8c8c8c" stroke-width="2"/></svg>
<div class="t" style="left:1737.30px;top:1291.94px;font-size:27px;line-height:27px;color:#a6a8aa;font-weight:400;letter-spacing:-0.110px;">Apply</div>
<div style="position:absolute;left:1847px;top:1px;width:1.6px;height:1334px;background:#b7babb"></div>
</body></html>
